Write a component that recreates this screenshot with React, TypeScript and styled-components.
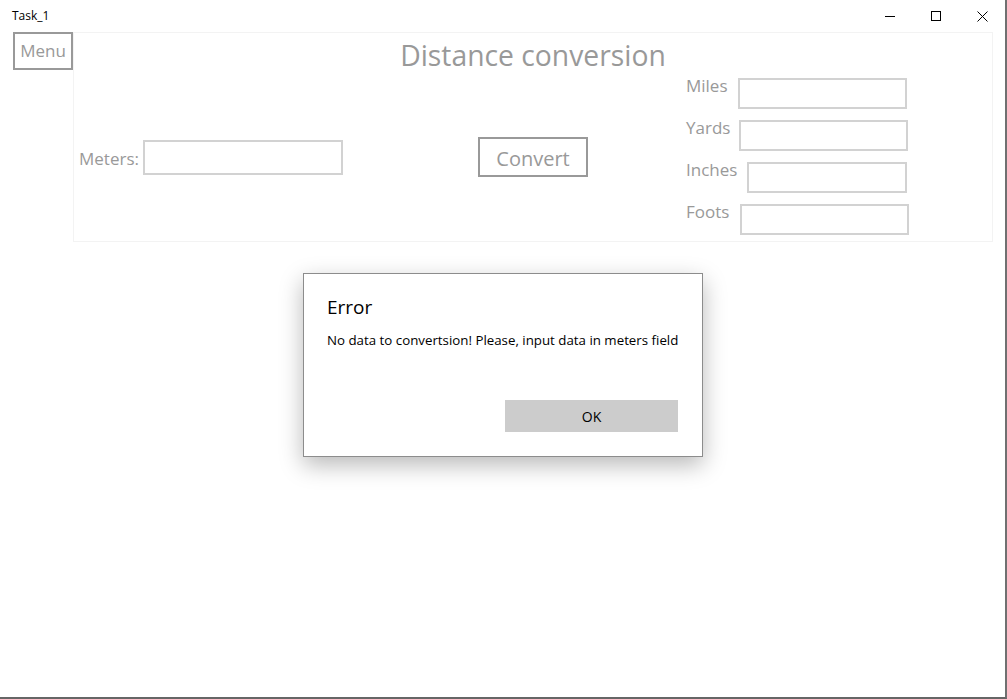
import React from "react";
import styled, { createGlobalStyle } from "styled-components";

const Global = createGlobalStyle`
  html, body { margin: 0; padding: 0; background: #fff; }
  body { font-family: "Open Sans", "Noto Sans", sans-serif; overflow: hidden; }
  * { box-sizing: border-box; }
`;

const Window = styled.div`
  position: relative;
  width: 1007px;
  height: 699px;
  background: #fff;
  border-right: 2px solid #707070;
  border-bottom: 2px solid #666;
  display: flex;
  flex-direction: column;
`;

const TitleBar = styled.div`
  height: 32px;
  display: flex;
  align-items: center;
  padding-left: 12px;
`;

const TitleText = styled.div`
  font-size: 12px;
  color: #000;
  flex: 1;
  margin-top: -2px;
`;

const Controls = styled.div`
  display: flex;
  height: 32px;
`;

const CtrlBtn = styled.div`
  width: 46px;
  height: 32px;
  display: flex;
  align-items: center;
  justify-content: center;
`;

const Body = styled.div`
  display: flex;
  align-items: flex-start;
  padding-left: 13px;
`;

const MenuButton = styled.div`
  width: 60px;
  height: 38px;
  border: 2px solid #999;
  display: flex;
  align-items: center;
  justify-content: center;
  font-size: 17px;
  color: #999;
  padding-bottom: 1px;
`;

const Panel = styled.div`
  width: 920px;
  height: 210px;
  border: 1px solid #f3f3f3;
  display: flex;
  flex-direction: column;
`;

const Heading = styled.h1`
  margin: 0;
  height: 45px;
  font-weight: 400;
  font-size: 28.3px;
  line-height: 44px;
  color: #999;
  text-align: center;
`;

const Row = styled.div`
  display: flex;
  align-items: center;
  height: 158px;
  padding-left: 5px;
`;

const LeftCell = styled.div`
  width: 399px;
  display: flex;
  align-items: center;
`;

const Label = styled.span`
  font-size: 17px;
  color: #999;
  margin-top: 3px;
`;

const TextBox = styled.div<{ $w: number; $h: number; $ml?: number }>`
  width: ${(p) => p.$w}px;
  height: ${(p) => p.$h}px;
  margin-left: ${(p) => p.$ml ?? 0}px;
  border: 2px solid #d2d2d2;
  background: #fff;
`;

const ConvertButton = styled.div`
  width: 110px;
  height: 40px;
  border: 2px solid #999;
  display: flex;
  align-items: center;
  justify-content: center;
  font-size: 20px;
  color: #999;
  padding-top: 2px;
`;

const RightCol = styled.div`
  align-self: flex-start;
  margin-left: 98px;
  display: flex;
  flex-direction: column;
  gap: 11px;
`;

const FieldRow = styled.div`
  display: flex;
  align-items: flex-start;
  height: 31px;
`;

const FieldLabel = styled.span<{ $w: number }>`
  width: ${(p) => p.$w}px;
  font-size: 17px;
  color: #999;
  line-height: 18px;
  margin-top: -1px;
`;

const Overlay = styled.div`
  position: absolute;
  left: 303px;
  top: 273px;
  width: 400px;
  height: 184px;
  background: #fff;
  border: 1px solid #8c8c8c;
  box-shadow: 0 8px 22px rgba(0, 0, 0, 0.28);
  padding: 19px 24px 24px 23px;
  display: flex;
  flex-direction: column;
`;

const DialogTitle = styled.div`
  font-size: 19px;
  color: #000;
  line-height: 28px;
`;

const DialogText = styled.div`
  font-size: 13.3px;
  color: #000;
  margin-top: 9px;
  line-height: 20px;
  white-space: nowrap;
  flex: 1;
`;

const OkButton = styled.div`
  align-self: flex-end;
  width: 173px;
  height: 32px;
  background: #cccccc;
  display: flex;
  align-items: center;
  justify-content: center;
  font-size: 14px;
  color: #000;
`;

const fields = [
  { label: "Miles", lw: 52, w: 169 },
  { label: "Yards", lw: 53, w: 169 },
  { label: "Inches", lw: 61, w: 160 },
  { label: "Foots", lw: 54, w: 169 },
];

export default function App() {
  return (
    <>
      <Global />
      <Window>
        <TitleBar>
          <TitleText>Task_1</TitleText>
          <Controls>
            <CtrlBtn>
              <svg width="10" height="10" viewBox="0 0 10 10">
                <path d="M0 5.5h10" stroke="#000" strokeWidth="1" />
              </svg>
            </CtrlBtn>
            <CtrlBtn>
              <svg width="10" height="10" viewBox="0 0 10 10">
                <rect x="0.5" y="0.5" width="9" height="9" fill="none" stroke="#000" strokeWidth="1" />
              </svg>
            </CtrlBtn>
            <CtrlBtn>
              <svg width="11" height="11" viewBox="0 0 11 11">
                <path d="M0.5 0.5L10.5 10.5M10.5 0.5L0.5 10.5" stroke="#000" strokeWidth="1" />
              </svg>
            </CtrlBtn>
          </Controls>
        </TitleBar>
        <Body>
          <MenuButton>Menu</MenuButton>
          <Panel>
            <Heading>Distance conversion</Heading>
            <Row>
              <LeftCell>
                <Label>Meters:</Label>
                <TextBox $w={200} $h={35} $ml={4} />
              </LeftCell>
              <ConvertButton>Convert</ConvertButton>
              <RightCol>
                {fields.map((f) => (
                  <FieldRow key={f.label}>
                    <FieldLabel $w={f.lw}>{f.label}</FieldLabel>
                    <TextBox $w={f.w} $h={31} />
                  </FieldRow>
                ))}
              </RightCol>
            </Row>
          </Panel>
        </Body>
        <Overlay>
          <DialogTitle>Error</DialogTitle>
          <DialogText>No data to convertsion! Please, input data in meters field</DialogText>
          <OkButton>OK</OkButton>
        </Overlay>
      </Window>
    </>
  );
}
